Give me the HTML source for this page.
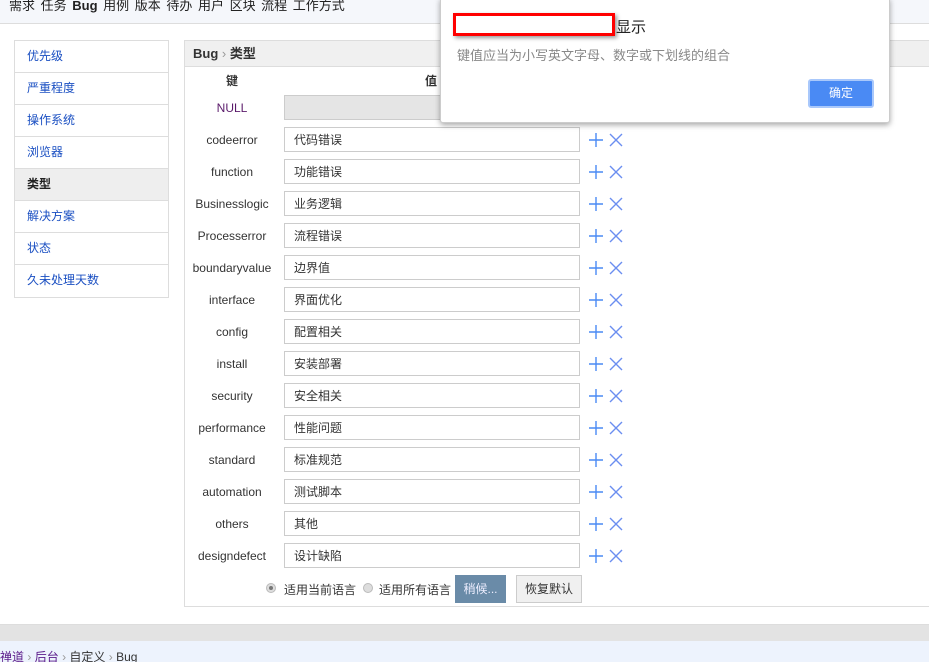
<!DOCTYPE html>
<html><head><meta charset="utf-8"><style>
*{box-sizing:border-box;margin:0;padding:0}
html,body{width:929px;height:662px;overflow:hidden;background:#fff}
body{font-family:"Liberation Sans","Noto Sans CJK SC",sans-serif;font-size:12px;color:#333;position:relative}
.abs{position:absolute}
#top{left:0;top:0;width:929px;height:24px;background:#f5f7fb;border-bottom:1px solid #ddd;font-size:13px;color:#222;padding-left:9px;line-height:12px;word-spacing:2px}
.menu{left:14px;width:155px;top:40px;border:1px solid #ddd}
.menu div{height:32px;line-height:31px;padding-left:12px;border-bottom:1px solid #ddd;color:#1a4fc2}
.menu div:last-child{border-bottom:none}
.menu .act{background:#eee;color:#222;font-weight:bold}
#panel{left:184px;top:40px;width:760px;height:567px;border:1px solid #ddd}
#ph{height:26px;background:#f0f0f0;border-bottom:1px solid #ddd;line-height:26px;padding-left:8px;font-weight:bold;font-size:13px}
.k{position:absolute;width:100px;left:182px;text-align:center;color:#333}
.in{position:absolute;left:284px;width:296px;height:25px;border:1px solid #ccc;padding-left:9px;line-height:24px;font-size:12px}
.ic{position:absolute;left:589px}
</style></head><body>
<div id="top" class="abs">需求 任务 <b>Bug</b> 用例 版本 待办 用户 区块 流程 工作方式</div>
<div class="abs menu"><div>优先级</div><div>严重程度</div><div>操作系统</div><div>浏览器</div><div class="act">类型</div><div>解决方案</div><div>状态</div><div>久未处理天数</div></div>
<div id="panel" class="abs"><div id="ph">Bug <span style="color:#999;font-weight:normal">›</span> 类型</div></div>
<div class="k" style="top:72px;font-weight:bold">键</div>
<div class="abs" style="left:425px;top:72px;font-weight:bold">值</div>
<div class="k" style="top:101px;color:#5a1a6a">NULL</div>
<div class="in" style="top:95px;background:#e5e5e5"></div>
<div id="rows"></div>
<div class="abs" style="left:266px;top:583px;width:10px;height:10px;border-radius:50%;background:#ddd;border:1px solid #bbb"><div style="margin:2px;width:4px;height:4px;border-radius:50%;background:#777"></div></div>
<div class="abs" style="left:284px;top:581px">适用当前语言</div>
<div class="abs" style="left:363px;top:583px;width:10px;height:10px;border-radius:50%;background:#ddd;border:1px solid #bbb"></div>
<div class="abs" style="left:379px;top:581px">适用所有语言</div>
<div class="abs" style="left:455px;top:575px;width:51px;height:28px;background:#6a8ba8;color:#eef;line-height:28px;text-align:center">稍候...</div>
<div class="abs" style="left:516px;top:575px;width:66px;height:28px;background:#f0f0f0;border:1px solid #ccc;line-height:26px;text-align:center">恢复默认</div>
<div class="abs" style="left:0;top:624px;width:929px;height:17px;background:#e3e3e3;border-top:1px solid #ddd"></div>
<div class="abs" style="left:0;top:641px;width:929px;height:40px;background:#edf3fd;line-height:32px;font-size:12px;color:#333"><span style="color:#5a1a8a">禅道</span> <span style="color:#999">›</span> <span style="color:#5a1a8a">后台</span> <span style="color:#999">›</span> 自定义 <span style="color:#999">›</span> Bug</div>
<div class="abs" style="left:440px;top:-2px;width:450px;height:125px;background:#fff;border:1px solid #ccc;box-shadow:0 2px 6px rgba(0,0,0,.35);border-radius:0 0 3px 3px"></div>
<div class="abs" style="left:453px;top:13px;width:162px;height:23px;background:#fff;border:3px solid #f00;box-shadow:2px 2px 4px rgba(0,0,0,.4)"></div>
<div class="abs" style="left:616px;top:16px;font-size:15px;color:#222">显示</div>
<div class="abs" style="left:457px;top:45px;font-size:13px;color:#888">键值应当为小写英文字母、数字或下划线的组合</div>
<div class="abs" style="left:808px;top:79px;width:66px;height:29px;background:#4a8af4;border:2px solid #a9c8fb;border-radius:3px;color:#fff;text-align:center;line-height:25px">确定</div>
<script>
var d=[["codeerror","代码错误"],["function","功能错误"],["Businesslogic","业务逻辑"],["Processerror","流程错误"],["boundaryvalue","边界值"],["interface","界面优化"],["config","配置相关"],["install","安装部署"],["security","安全相关"],["performance","性能问题"],["standard","标准规范"],["automation","测试脚本"],["others","其他"],["designdefect","设计缺陷"]];
var h="";d.forEach(function(r,i){var t=127+32*i;h+='<div class="k" style="top:'+(t+6)+'px">'+r[0]+'</div><div class="in" style="top:'+t+'px">'+r[1]+'</div><svg class="ic" style="top:'+(t+4)+'px" width="40" height="18"><path d="M7 2V16M0 9H14" stroke="#4a8af4" stroke-width="1.4" fill="none"/><path d="M21 3L33 15M33 3L21 15" stroke="#6b8ef0" stroke-width="1.4" fill="none"/></svg>';});
document.getElementById("rows").innerHTML=h;
</script>
</body></html>
